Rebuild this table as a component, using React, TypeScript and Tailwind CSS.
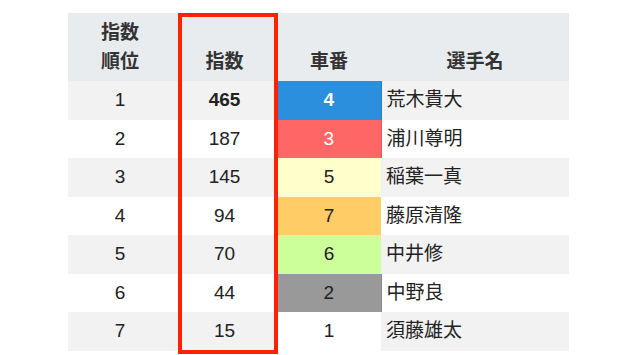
import React from "react";

const rows = [
  { rank: "1", idx: "465", car: "4", name: "荒木貴大", bold: true },
  { rank: "2", idx: "187", car: "3", name: "浦川尊明" },
  { rank: "3", idx: "145", car: "5", name: "稲葉一真" },
  { rank: "4", idx: "94", car: "7", name: "藤原清隆" },
  { rank: "5", idx: "70", car: "6", name: "中井修" },
  { rank: "6", idx: "44", car: "2", name: "中野良" },
  { rank: "7", idx: "15", car: "1", name: "須藤雄太" },
];

const carClass: Record<string, string> = {
  "1": "bg-white text-[#222]",
  "2": "bg-[#999999] text-[#222] border-r border-r-[#8a8a8a]",
  "3": "bg-[#ff6666] text-white border-r border-r-[#f05555]",
  "4": "bg-[#2b8fde] text-white font-bold border-r border-r-[#2a7fc8]",
  "5": "bg-[#ffffcc] text-[#222]",
  "6": "bg-[#ccff99] text-[#222]",
  "7": "bg-[#ffcc66] text-[#222]",
};

export default function App() {
  return (
    <div
      className="w-[640px] h-[355px] bg-white overflow-hidden"
      style={{ fontFamily: '"Liberation Sans", "Noto Sans CJK JP", sans-serif' }}
    >
      <div className="relative ml-[68px] mt-[13px] w-[501px]">
        <table className="border-collapse table-fixed w-[501px] text-[19px] text-[#222]">
          <colgroup>
            <col className="w-[104px]" />
            <col className="w-[105px]" />
            <col className="w-[104px]" />
            <col className="w-[188px]" />
          </colgroup>
          <thead>
            <tr className="bg-[#e9ecef] h-[68px] text-[#333] font-bold">
              <th className="align-bottom pb-[5px] leading-[29px] font-bold">
                指数
                <br />
                順位
              </th>
              <th className="align-bottom pb-[5px] leading-[29px] font-bold">指数</th>
              <th className="align-bottom pb-[5px] leading-[29px] font-bold">車番</th>
              <th className="align-bottom pb-[5px] leading-[29px] font-bold">選手名</th>
            </tr>
          </thead>
          <tbody>
            {rows.map((r, i) => (
              <tr
                key={r.rank}
                className={`h-[38.5px] ${i % 2 === 0 ? "bg-[#f2f2f2]" : "bg-white"}`}
              >
                <td className="text-center p-0">{r.rank}</td>
                <td className={`text-center p-0 ${r.bold ? "font-bold" : ""}`}>{r.idx}</td>
                <td className={`text-center p-0 ${carClass[r.car]}`}>{r.car}</td>
                <td className="text-left pl-[5px] p-0">{r.name}</td>
              </tr>
            ))}
          </tbody>
        </table>
        <div className="absolute left-[110px] top-0 w-[100px] h-[341px] border-[4px] border-[#ff2200] pointer-events-none" />
      </div>
    </div>
  );
}
